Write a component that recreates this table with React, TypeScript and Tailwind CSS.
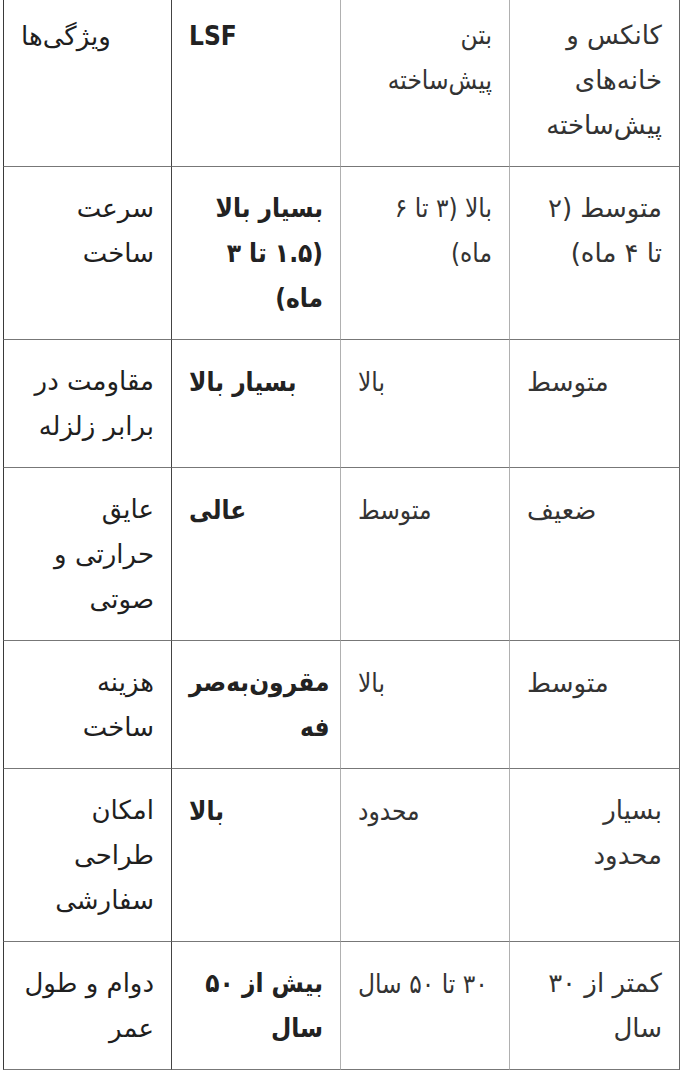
import React from "react";

type Row = [React.ReactNode, React.ReactNode, string, string];

const header: Row = ["ویژگی‌ها", "LSF", "بتن پیش‌ساخته", "کانکس و خانه‌های پیش‌ساخته"];

const rows: Row[] = [
  ["سرعت ساخت", "بسیار بالا (۱.۵ تا ۳ ماه)", "بالا (۳ تا ۶ ماه)", "متوسط (۲ تا ۴ ماه)"],
  ["مقاومت در برابر زلزله", "بسیار بالا", "بالا", "متوسط"],
  ["عایق حرارتی و صوتی", "عالی", "متوسط", "ضعیف"],
  [
    "هزینه ساخت",
    <>
      مقرون‌به‌صر
      <br />
      فه
    </>,
    "بالا",
    "متوسط",
  ],
  ["امکان طراحی سفارشی", "بالا", "محدود", "بسیار محدود"],
  ["دوام و طول عمر", "بیش از ۵۰ سال", "۳۰ تا ۵۰ سال", "کمتر از ۳۰ سال"],
];

// per-column look: right border colour + text style
const colCell = [
  "border-l border-l-[#3a3a3a] border-r-[#444444]",
  "border-r-[#b0b0b0]",
  "border-r-[#b0b0b0]",
  "border-r-[#666666]",
];

const colText = [
  "font-normal text-[#1f1f1f] [font-family:'DejaVu_Sans',sans-serif]",
  "font-bold text-[#222222] [font-family:'DejaVu_Sans_Condensed','DejaVu_Sans',sans-serif]",
  "font-normal text-[#333333] [font-family:'DejaVu_Sans_Condensed','DejaVu_Sans',sans-serif]",
  "font-normal text-[#333333] [font-family:'DejaVu_Sans',sans-serif]",
];

const Cell = ({ text, col }: { text: React.ReactNode; col: number }) => (
  <td
    className={`border-r border-b border-b-[#777777] align-top pl-[17px] pr-[17px] pt-[19px] pb-[18px] ${colCell[col]}`}
  >
    <span dir="rtl" className={`inline-block text-right ${colText[col]}`}>
      {text}
    </span>
  </td>
);

export default function App() {
  return (
    <div className="bg-white min-h-[1080px] overflow-hidden">
      <table className="table-fixed border-separate border-spacing-0 w-[677px] ml-[3px] mt-[-6px] text-[26px] leading-[45px]">
        <colgroup>
          <col className="w-[169px]" />
          <col className="w-[169px]" />
          <col className="w-[169px]" />
          <col className="w-[170px]" />
        </colgroup>
        <thead>
          <tr>
            {header.map((h, i) => (
              <Cell key={i} text={h} col={i} />
            ))}
          </tr>
        </thead>
        <tbody>
          {rows.map((r, ri) => (
            <tr key={ri}>
              {r.map((c, ci) => (
                <Cell key={ci} text={c} col={ci} />
              ))}
            </tr>
          ))}
        </tbody>
      </table>
    </div>
  );
}
